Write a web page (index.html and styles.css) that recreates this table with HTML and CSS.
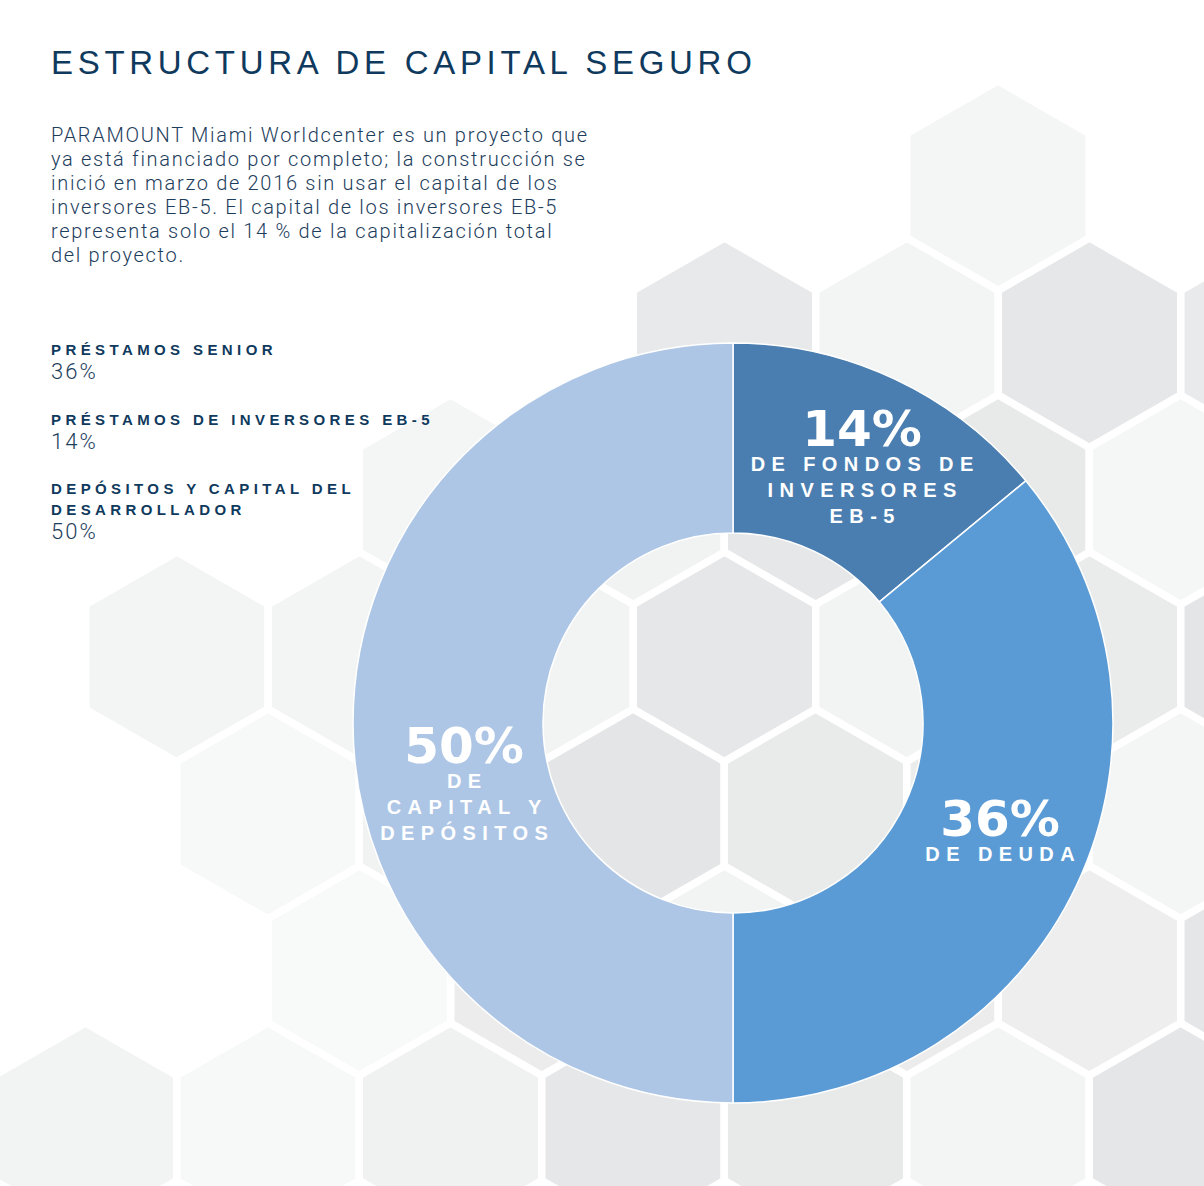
FILE: index.html
```html
<!DOCTYPE html>
<html lang="es">
<head>
<meta charset="utf-8">
<title>Estructura de capital seguro</title>
<link rel="stylesheet" href="styles.css">
</head>
<body>
<div class="page">
  <svg class="hexbg" width="1204" height="1186" viewBox="0 0 1204 1186" aria-hidden="true">
    <defs>
      <polygon id="hx" points="0,-105 91.25,-52.5 91.25,52.5 0,105 -91.25,52.5 -91.25,-52.5"/>
    </defs>
    <g stroke="#ffffff" stroke-width="7.5">
      <use href="#hx" x="998" y="186" fill="#f4f5f5"/>

      <use href="#hx" x="724.5" y="343" fill="#e8e9ea"/>
      <use href="#hx" x="907" y="343" fill="#f3f4f4"/>
      <use href="#hx" x="1089.5" y="343" fill="#e6e7e8"/>
      <use href="#hx" x="1272" y="343" fill="#e9eaeb"/>

      <use href="#hx" x="450.5" y="500" fill="#f4f5f5"/>
      <use href="#hx" x="633" y="500" fill="#f1f2f2"/>
      <use href="#hx" x="815.5" y="500" fill="#e6e7e8"/>
      <use href="#hx" x="998" y="500" fill="#e8e9e9"/>
      <use href="#hx" x="1180.5" y="500" fill="#f5f6f6"/>

      <use href="#hx" x="177" y="657" fill="#f3f4f4"/>
      <use href="#hx" x="359.5" y="657" fill="#f3f4f4"/>
      <use href="#hx" x="542" y="657" fill="#f2f3f3"/>
      <use href="#hx" x="724.5" y="657" fill="#e6e7e8"/>
      <use href="#hx" x="907" y="657" fill="#f2f3f3"/>
      <use href="#hx" x="1089.5" y="657" fill="#eaebeb"/>
      <use href="#hx" x="1272" y="657" fill="#e4e5e6"/>

      <use href="#hx" x="268" y="814" fill="#f7f8f8"/>
      <use href="#hx" x="450.5" y="814" fill="#f1f2f2"/>
      <use href="#hx" x="633" y="814" fill="#e4e5e6"/>
      <use href="#hx" x="815.5" y="814" fill="#e9eaea"/>
      <use href="#hx" x="998" y="814" fill="#ebecec"/>
      <use href="#hx" x="1180.5" y="814" fill="#f4f5f5"/>

      <use href="#hx" x="359.5" y="971" fill="#f8f9f9"/>
      <use href="#hx" x="542" y="971" fill="#ececec"/>
      <use href="#hx" x="724.5" y="971" fill="#f2f3f3"/>
      <use href="#hx" x="907" y="971" fill="#ececed"/>
      <use href="#hx" x="1089.5" y="971" fill="#eeeeef"/>
      <use href="#hx" x="1272" y="971" fill="#e5e6e7"/>

      <use href="#hx" x="85.5" y="1128" fill="#f2f3f3"/>
      <use href="#hx" x="268" y="1128" fill="#f7f8f8"/>
      <use href="#hx" x="450.5" y="1128" fill="#f0f1f1"/>
      <use href="#hx" x="633" y="1128" fill="#e6e7e8"/>
      <use href="#hx" x="815.5" y="1128" fill="#e8e9e9"/>
      <use href="#hx" x="998" y="1128" fill="#f3f4f4"/>
      <use href="#hx" x="1180.5" y="1128" fill="#e5e6e7"/>
    </g>
  </svg>

  <div class="content">
    <h1 class="title">ESTRUCTURA DE CAPITAL SEGURO</h1>
    <p class="intro">PARAMOUNT Miami Worldcenter es un proyecto que<br>ya está financiado por completo; la construcción se<br>inició en marzo de 2016 sin usar el capital de los<br>inversores EB-5. El capital de los inversores EB-5<br>representa solo el 14 % de la capitalización total<br>del proyecto.</p>

    <div class="main">
      <ul class="legend">
        <li class="legend-item">
          <div class="legend-label">PRÉSTAMOS SENIOR</div>
          <div class="legend-value">36%</div>
        </li>
        <li class="legend-item">
          <div class="legend-label">PRÉSTAMOS DE INVERSORES EB-5</div>
          <div class="legend-value">14%</div>
        </li>
        <li class="legend-item">
          <div class="legend-label">DEPÓSITOS Y CAPITAL DEL<br>DESARROLLADOR</div>
          <div class="legend-value">50%</div>
        </li>
      </ul>

      <div class="chart">
        <svg class="donut" width="762" height="762" viewBox="0 0 762 762" aria-hidden="true">
          <g stroke="#ffffff" stroke-width="1.5">
            <path fill="#4a7eb0" d="M381 1 A380 380 0 0 1 673.8 138.8 L527.4 259.9 A190 190 0 0 0 381 191 Z"/>
            <path fill="#5b9bd5" d="M673.8 138.8 A380 380 0 0 1 381 761 L381 571 A190 190 0 0 0 527.4 259.9 Z"/>
            <path fill="#adc6e5" d="M381 761 A380 380 0 0 1 381 1 L381 191 A190 190 0 0 0 381 571 Z"/>
          </g>
        </svg>
        <div class="slice-label label-eb5">
          <div class="slice-pct">14%</div>
          <div class="slice-text">DE FONDOS DE</div>
          <div class="slice-text">INVERSORES</div>
          <div class="slice-text">EB-5</div>
        </div>
        <div class="slice-label label-deuda">
          <div class="slice-pct">36%</div>
          <div class="slice-text">DE DEUDA</div>
        </div>
        <div class="slice-label label-capital">
          <div class="slice-pct">50%</div>
          <div class="slice-text">DE</div>
          <div class="slice-text">CAPITAL Y</div>
          <div class="slice-text">DEPÓSITOS</div>
        </div>
      </div>
    </div>
  </div>
</div>
</body>
</html>
```

FILE: styles.css
```css
html, body {
  margin: 0;
  padding: 0;
  background: #ffffff;
}

.page {
  position: relative;
  width: 1204px;
  height: 1186px;
  overflow: hidden;
  font-family: "Liberation Sans", Arial, sans-serif;
  color: #1e3e5d;
}

.hexbg {
  position: absolute;
  left: 0;
  top: 0;
  display: block;
}

.content {
  position: relative;
  padding: 46px 0 0 51px;
}

.title {
  margin: 0;
  font-family: "Liberation Sans", Arial, sans-serif;
  font-weight: 400;
  font-size: 33px;
  line-height: 33px;
  letter-spacing: 4.7px;
  color: #0f3a5d;
  white-space: nowrap;
}

.intro {
  margin: 44px 0 0;
  font-family: "Roboto", "Liberation Sans", sans-serif;
  font-weight: 300;
  font-size: 20px;
  line-height: 24px;
  letter-spacing: 1.7px;
  color: #1d3d5c;
  white-space: nowrap;
}

.main {
  display: grid;
  grid-template-columns: 301px 762px;
  align-items: start;
  margin-top: 72px;
}

.legend {
  list-style: none;
  margin: 0;
  padding: 0;
  display: flex;
  flex-direction: column;
  gap: 24.5px;
}

.legend-label {
  font-family: "Liberation Sans", Arial, sans-serif;
  font-weight: 700;
  font-size: 15px;
  line-height: 21px;
  letter-spacing: 4.4px;
  color: #0f3a5d;
  white-space: nowrap;
}

.legend-value {
  font-family: "Roboto", "Liberation Sans", sans-serif;
  font-weight: 300;
  font-size: 22px;
  line-height: 24px;
  letter-spacing: 2px;
  color: #1d3d5c;
}

.chart {
  position: relative;
  width: 762px;
  height: 762px;
  margin-top: 3px;
}

.donut {
  display: block;
}

.slice-label {
  position: absolute;
  transform: translateX(-50%);
  text-align: center;
  color: #ffffff;
  white-space: nowrap;
}

.slice-pct {
  font-family: "DejaVu Sans", "Liberation Sans", sans-serif;
  font-weight: 700;
  font-size: 50px;
  line-height: 44px;
}

.slice-text {
  font-family: "Liberation Sans", Arial, sans-serif;
  font-weight: 700;
  font-size: 20px;
  line-height: 26px;
  letter-spacing: 6.4px;
  padding-left: 6.4px;
}

.label-eb5 {
  left: 510px;
  top: 65px;
}

.label-deuda {
  left: 648px;
  top: 455px;
}

.label-capital {
  left: 112px;
  top: 382px;
}
```
